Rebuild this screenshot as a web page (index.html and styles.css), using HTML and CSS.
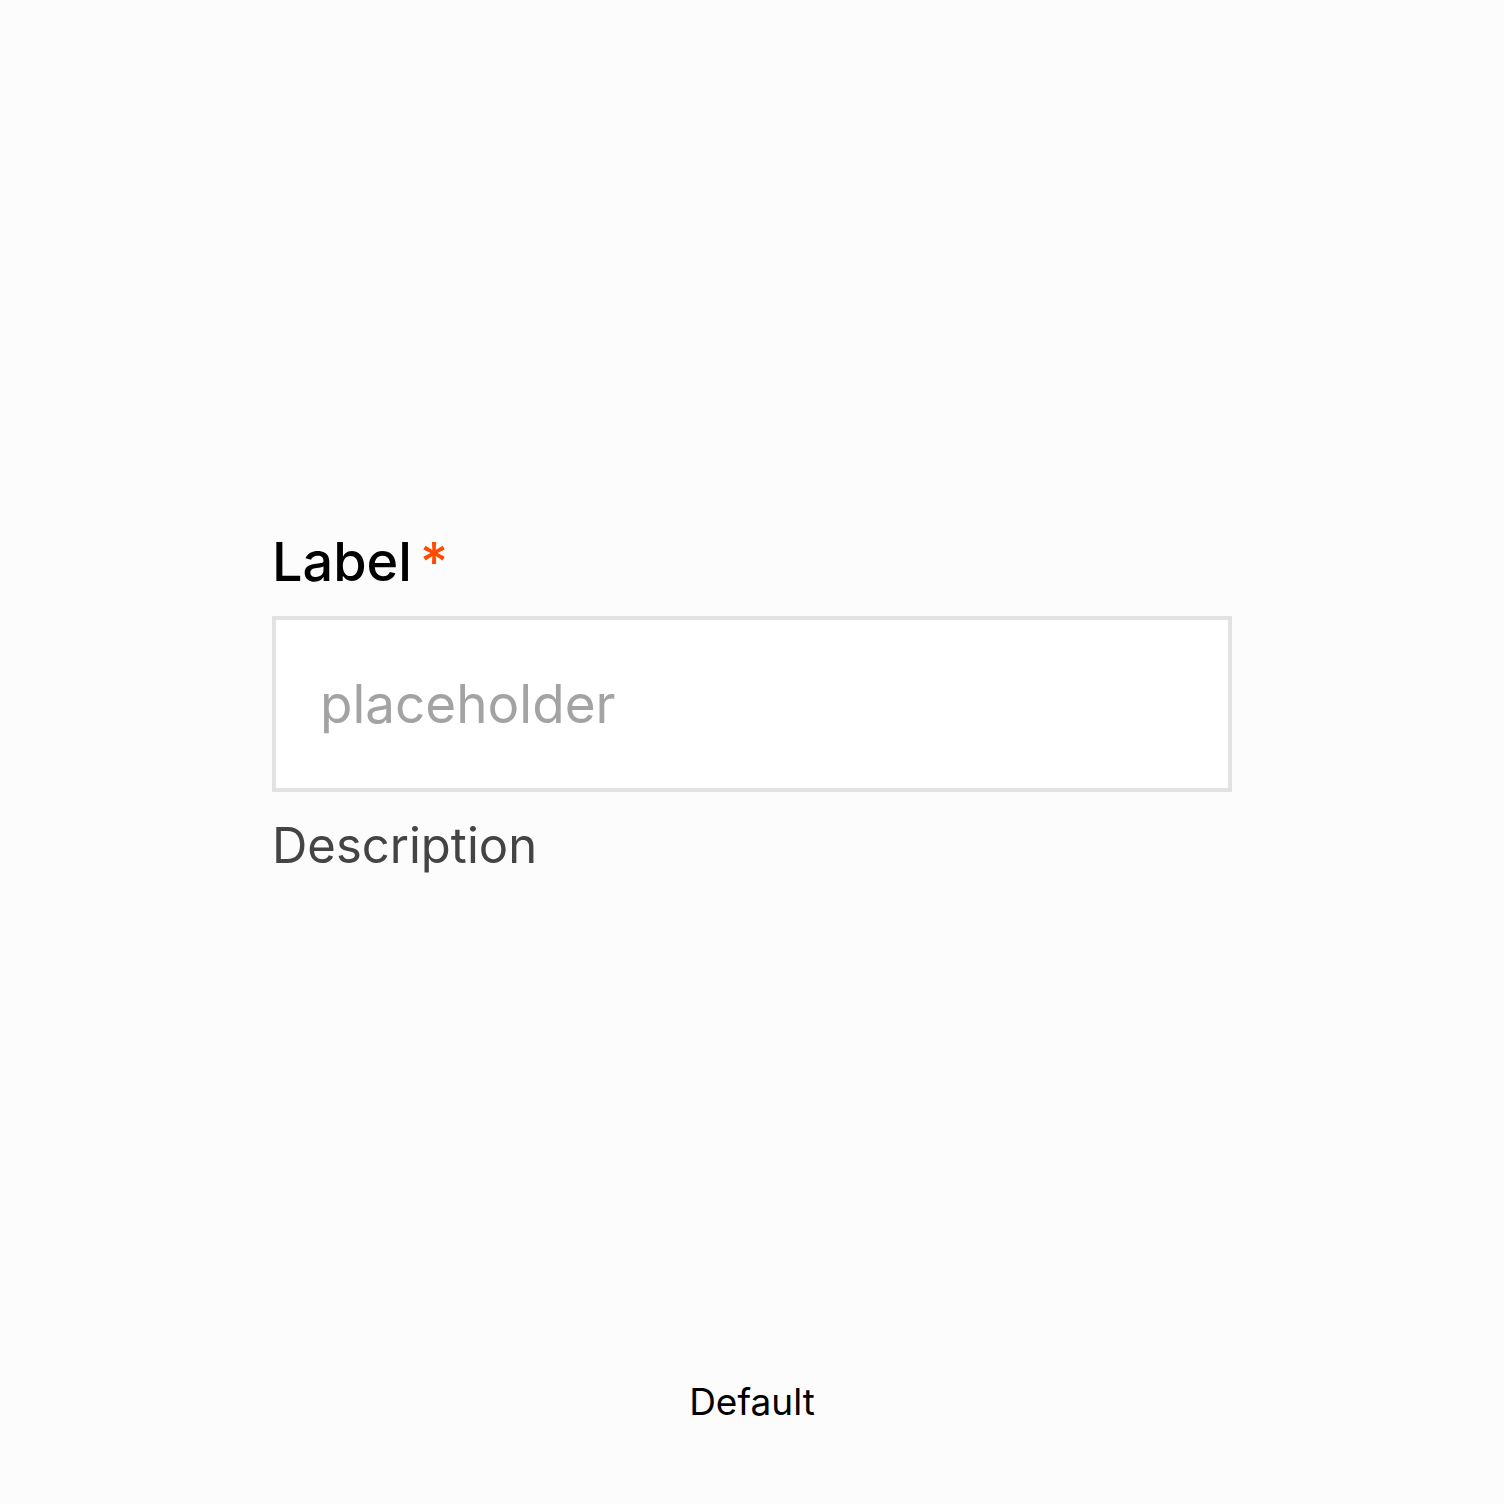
FILE: index.html
```html
<!DOCTYPE html>
<html>
<head>
<meta charset="utf-8">
<link rel="stylesheet" href="styles.css">
</head>
<body>
<main class="stage">
  <div class="field">
    <label class="label">Label<span class="req">*</span></label>
    <div class="input"><span class="placeholder">placeholder</span></div>
    <div class="desc">Description</div>
  </div>
</main>
<footer class="caption">Default</footer>
</body>
</html>
```
FILE: styles.css
```css
html, body { margin: 0; padding: 0; }
body {
  width: 1504px;
  height: 1504px;
  background: #fcfcfc;
  font-family: Inter, "Noto Sans", sans-serif;
  display: flex;
  flex-direction: column;
}
.stage {
  flex: 1;
  display: flex;
  align-items: center;
  justify-content: center;
}
.field {
  width: 960px;
  display: flex;
  flex-direction: column;
  margin-top: 22px;
}
.label {
  font-size: 54px;
  font-weight: 500;
  color: #000;
  line-height: 68px;
  margin-bottom: 20px;
}
.req {
  color: #ff4a00;
  margin-left: 8px;
}
.input {
  height: 168px;
  background: #fff;
  border: 4px solid #e2e2e2;
  display: flex;
  align-items: center;
  padding-left: 44px;
}
.placeholder {
  font-size: 53px;
  color: #a3a3a3;
}
.desc {
  margin-top: 24px;
  font-size: 49px;
  color: #444;
  line-height: 60px;
}
.caption {
  text-align: center;
  font-size: 37px;
  color: #000;
  height: 122px;
  line-height: 40px;
}
```
